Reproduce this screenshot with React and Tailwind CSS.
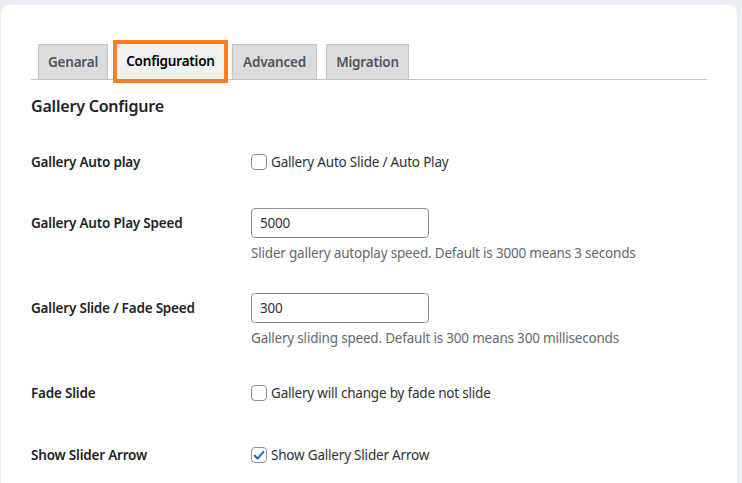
import React from "react";

const font = { fontFamily: '"Noto Sans", "Open Sans", sans-serif' };

function Checkbox({ checked }) {
  return (
    <span className="relative inline-flex h-[16px] w-[16px] shrink-0 items-center justify-center rounded-[4px] border border-[#8c8f94] bg-white">
      {checked && (
        <svg viewBox="0 0 20 20" className="h-[19px] w-[19px]">
          <path d="M3.8 10.2 L8 14.4 L16.4 4.8" fill="none" stroke="#2271b1" strokeWidth="3" strokeLinecap="round" strokeLinejoin="round" />
        </svg>
      )}
    </span>
  );
}

function Label({ children }) {
  return (
    <div className="w-[220px] shrink-0 text-[13.5px] font-semibold leading-[24px] tracking-[-0.2px] text-[#1d2327]">{children}</div>
  );
}

const tabBase = "flex h-[35px] items-center justify-center border border-b-0 border-[#c3c4c7] bg-[#dcdcde] text-[13.5px] font-semibold tracking-[-0.2px] text-[#50575e]";

export default function App() {
  return (
    <div className="h-[483px] w-[742px] overflow-hidden bg-[#eaeef3] pl-[1px] pr-[5px] pt-[5px]" style={font}>
      <div className="h-[600px] rounded-[8px] bg-white px-[30px] pt-[39px]">
        {/* tabs */}
        <div className="flex h-[36px] items-end border-b border-[#c3c4c7] pl-[7px]">
          <div className={`${tabBase} w-[70px]`}>Genaral</div>
          <div className="ml-[9px] flex h-[35px] w-[107px] items-center justify-center bg-[#f0f0f1] text-[13.5px] font-semibold tracking-[-0.2px] text-black outline-4 outline-solid outline-[#fd7e23]">
            Configuration
          </div>
          <div className={`${tabBase} ml-[8px] w-[85px]`}>Advanced</div>
          <div className={`${tabBase} ml-[9px] w-[83px]`}>Migration</div>
        </div>

        <h2 className="mt-[14px] text-[16px] font-semibold leading-[24px] tracking-[-0.2px] text-[#1d2327]">Gallery Configure</h2>

        {/* row 1 */}
        <div className="mt-[32px] flex items-center">
          <Label>Gallery Auto play</Label>
          <label className="flex items-center gap-[4px] text-[13.5px] leading-[24px] tracking-[-0.2px] text-[#2c3338]">
            <Checkbox />
            Gallery Auto Slide / Auto Play
          </label>
        </div>

        {/* row 2 */}
        <div className="mt-[34px] flex items-start">
          <div className="flex h-[30px] items-center"><Label>Gallery Auto Play Speed</Label></div>
          <div>
            <div className="flex h-[30px] w-[178px] items-center rounded-[4px] border border-[#8c8f94] px-[8px] text-[13.5px] tracking-[-0.2px] text-[#2c3338]">5000</div>
            <p className="mt-[5px] text-[13.5px] leading-[20px] tracking-[-0.2px] text-[#646970]">Slider gallery autoplay speed. Default is 3000 means 3 seconds</p>
          </div>
        </div>

        {/* row 3 */}
        <div className="mt-[30px] flex items-start">
          <div className="flex h-[30px] items-center"><Label>Gallery Slide / Fade Speed</Label></div>
          <div>
            <div className="flex h-[30px] w-[178px] items-center rounded-[4px] border border-[#8c8f94] px-[8px] text-[13.5px] tracking-[-0.2px] text-[#2c3338]">300</div>
            <p className="mt-[5px] text-[13.5px] leading-[20px] tracking-[-0.2px] text-[#646970]">Gallery sliding speed. Default is 300 means 300 milliseconds</p>
          </div>
        </div>

        {/* row 4 */}
        <div className="mt-[33px] flex items-center">
          <Label>Fade Slide</Label>
          <label className="flex items-center gap-[4px] text-[13.5px] leading-[24px] tracking-[-0.2px] text-[#2c3338]">
            <Checkbox />
            Gallery will change by fade not slide
          </label>
        </div>

        {/* row 5 */}
        <div className="mt-[38px] flex items-center">
          <Label>Show Slider Arrow</Label>
          <label className="flex items-center gap-[4px] text-[13.5px] leading-[24px] tracking-[-0.2px] text-[#2c3338]">
            <Checkbox checked />
            Show Gallery Slider Arrow
          </label>
        </div>
      </div>
    </div>
  );
}
